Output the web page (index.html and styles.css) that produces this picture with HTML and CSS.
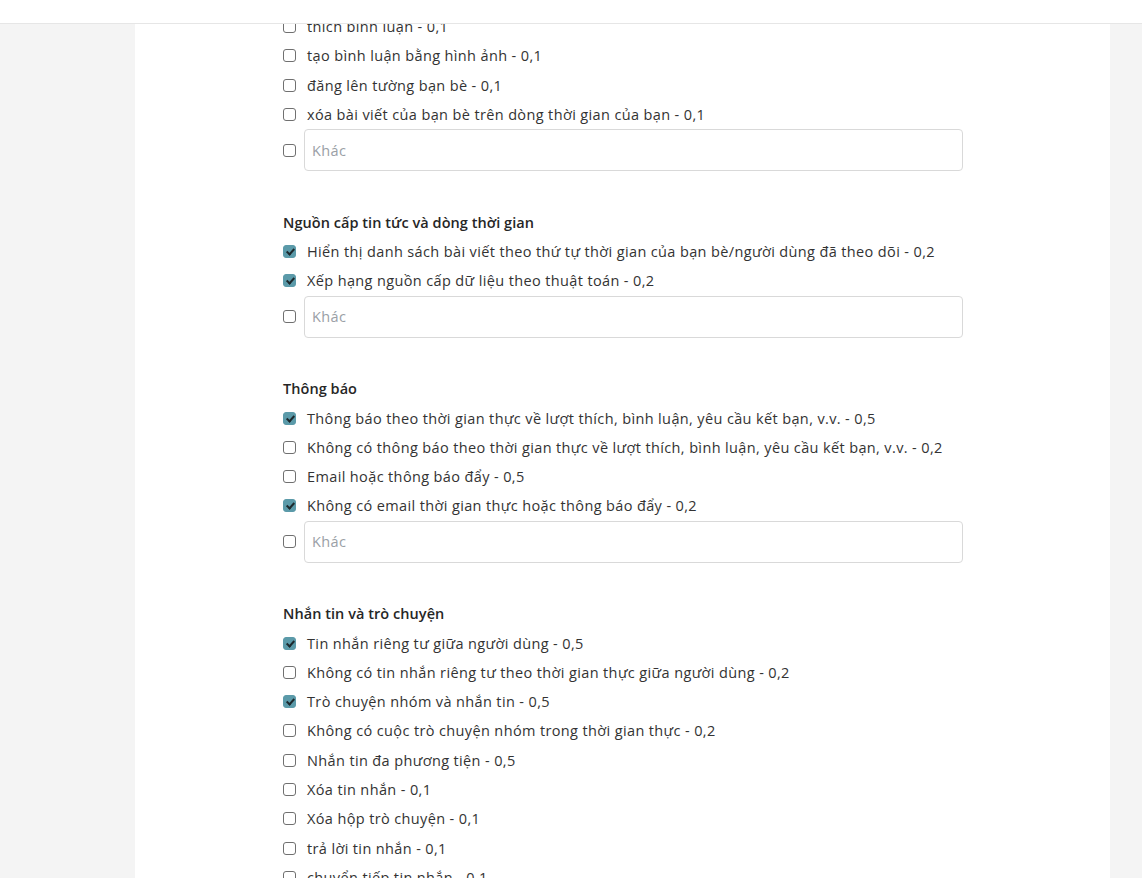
FILE: index.html
```html
<!DOCTYPE html>
<html lang="vi">
<head>
<meta charset="utf-8">
<title>Khảo sát</title>
<link rel="stylesheet" href="styles.css">
</head>
<body>
<header class="topbar"></header>
<main class="card">
  <div class="content">
    <div class="group">
      <label class="opt"><span class="box"></span><span class="txt">thích bình luận - 0,1</span></label>
      <label class="opt"><span class="box"></span><span class="txt">tạo bình luận bằng hình ảnh - 0,1</span></label>
      <label class="opt"><span class="box"></span><span class="txt">đăng lên tường bạn bè - 0,1</span></label>
      <label class="opt"><span class="box"></span><span class="txt">xóa bài viết của bạn bè trên dòng thời gian của bạn - 0,1</span></label>
      <div class="other"><span class="box"></span><div class="field">Khác</div></div>
    </div>

    <div class="group">
      <h3 class="title">Nguồn cấp tin tức và dòng thời gian</h3>
      <label class="opt"><span class="box on"></span><span class="txt">Hiển thị danh sách bài viết theo thứ tự thời gian của bạn bè/người dùng đã theo dõi - 0,2</span></label>
      <label class="opt"><span class="box on"></span><span class="txt">Xếp hạng nguồn cấp dữ liệu theo thuật toán - 0,2</span></label>
      <div class="other"><span class="box"></span><div class="field">Khác</div></div>
    </div>

    <div class="group">
      <h3 class="title">Thông báo</h3>
      <label class="opt"><span class="box on"></span><span class="txt">Thông báo theo thời gian thực về lượt thích, bình luận, yêu cầu kết bạn, v.v. - 0,5</span></label>
      <label class="opt"><span class="box"></span><span class="txt">Không có thông báo theo thời gian thực về lượt thích, bình luận, yêu cầu kết bạn, v.v. - 0,2</span></label>
      <label class="opt"><span class="box"></span><span class="txt">Email hoặc thông báo đẩy - 0,5</span></label>
      <label class="opt"><span class="box on"></span><span class="txt">Không có email thời gian thực hoặc thông báo đẩy - 0,2</span></label>
      <div class="other"><span class="box"></span><div class="field">Khác</div></div>
    </div>

    <div class="group">
      <h3 class="title">Nhắn tin và trò chuyện</h3>
      <label class="opt"><span class="box on"></span><span class="txt">Tin nhắn riêng tư giữa người dùng - 0,5</span></label>
      <label class="opt"><span class="box"></span><span class="txt">Không có tin nhắn riêng tư theo thời gian thực giữa người dùng - 0,2</span></label>
      <label class="opt"><span class="box on"></span><span class="txt">Trò chuyện nhóm và nhắn tin - 0,5</span></label>
      <label class="opt"><span class="box"></span><span class="txt">Không có cuộc trò chuyện nhóm trong thời gian thực - 0,2</span></label>
      <label class="opt"><span class="box"></span><span class="txt">Nhắn tin đa phương tiện - 0,5</span></label>
      <label class="opt"><span class="box"></span><span class="txt">Xóa tin nhắn - 0,1</span></label>
      <label class="opt"><span class="box"></span><span class="txt">Xóa hộp trò chuyện - 0,1</span></label>
      <label class="opt"><span class="box"></span><span class="txt">trả lời tin nhắn - 0,1</span></label>
      <label class="opt"><span class="box"></span><span class="txt">chuyển tiếp tin nhắn - 0,1</span></label>
    </div>
  </div>
</main>
</body>
</html>
```
FILE: styles.css
```css
html, body {
  margin: 0;
  padding: 0;
  background: #f4f4f4;
  height: 100%;
  overflow: hidden;
}
body {
  font-family: "Open Sans", "Liberation Sans", sans-serif;
  color: #333;
  font-size: 14.5px;
  letter-spacing: 0.37px;
}
.topbar {
  position: fixed;
  top: 0;
  left: 0;
  right: 0;
  height: 23px;
  background: #fff;
  border-bottom: 1px solid #e6e6e6;
  z-index: 5;
}
.card {
  margin-left: 135px;
  width: 975px;
  min-height: 100%;
  background: #fff;
  padding-top: 12px;
  box-sizing: border-box;
}
.content {
  margin-left: 148px;
  width: 680px;
}
.group {
  display: flex;
  flex-direction: column;
  margin-bottom: 36.4px;
}
.title {
  margin: 0;
  height: 29.3px;
  display: flex;
  align-items: center;
  font-size: 14.5px;
  font-weight: 600;
  letter-spacing: 0.05px;
  color: #262626;
}
.opt {
  height: 29.33px;
  display: flex;
  align-items: center;
  gap: 11px;
  white-space: nowrap;
}
.box {
  flex: none;
  width: 11px;
  height: 11px;
  border: 1px solid #707070;
  border-radius: 3px;
  background: #fff;
  position: relative;
}
.box.on {
  background: #5b9aa9;
  border-color: #5b9aa9;
}
.box.on::after {
  content: "";
  position: absolute;
  left: 3.5px;
  top: 1px;
  width: 3px;
  height: 6px;
  border: solid #1d2a2e;
  border-width: 0 2px 2px 0;
  transform: rotate(42deg);
}
.other {
  height: 42px;
  display: flex;
  align-items: center;
  gap: 8px;
}
.field {
  flex: 1;
  height: 40px;
  border: 1px solid #d9d9d9;
  border-radius: 4px;
  display: flex;
  align-items: center;
  padding-left: 7px;
  color: #9aa0a6;
  font-size: 14.5px;
}
```
